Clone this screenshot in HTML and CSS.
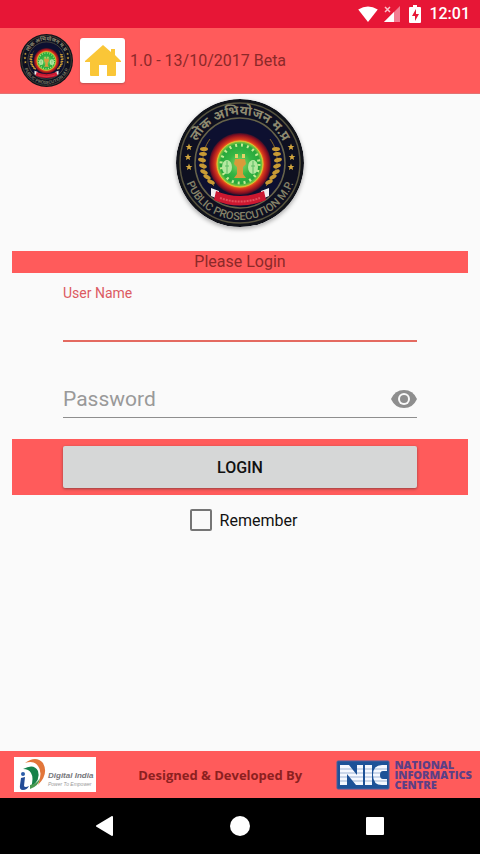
FILE: index.html
```
<!DOCTYPE html>
<html lang="en">
<head>
    <meta charset="UTF-8">
    <meta name="viewport" content="width=device-width, initial-scale=1.0">
    <title>Public Prosecution M.P. - Login</title>
    <link rel="stylesheet" href="styles.css">
</head>
<body>
    <!-- shared seal, used in the header and above the form -->
    <svg class="defs" aria-hidden="true">
        <defs>
            <radialGradient id="glow">
                <stop offset="0.7" stop-color="#f0a020"/>
                <stop offset="0.8" stop-color="#d8381c"/>
                <stop offset="0.93" stop-color="#8e1020"/>
                <stop offset="1" stop-color="#3c1028"/>
            </radialGradient>
            <radialGradient id="green">
                <stop offset="0" stop-color="#8fd868"/>
                <stop offset="0.5" stop-color="#35b544"/>
                <stop offset="0.85" stop-color="#28a83c"/>
                <stop offset="1" stop-color="#9fd040"/>
            </radialGradient>
            <path id="arcTop" d="M16 64a48 48 0 0 1 96 0"/>
            <path id="arcBottom" d="M7 64a57 57 0 0 0 114 0"/>
            <path id="star" d="M0-3.4 1-1.1 3.4-1 1.5.6 2.1 3 0 1.7-2.1 3-1.5.6-3.4-1-1-1.1z"/>
            <g id="wheat" fill="#c89a35">
                <path d="M38 87C25 74 23 55 34 40" fill="none" stroke="#8a6a28" stroke-width="1"/>
                <ellipse cx="35" cy="83" rx="4" ry="2" transform="rotate(25 35 83)"/>
                <ellipse cx="31" cy="78" rx="4" ry="2" transform="rotate(30 31 78)"/>
                <ellipse cx="28" cy="73" rx="4" ry="2" transform="rotate(25 28 73)"/>
                <ellipse cx="27" cy="67" rx="4" ry="2" transform="rotate(20 27 67)"/>
                <ellipse cx="26" cy="61" rx="4" ry="2" transform="rotate(15 26 61)"/>
                <ellipse cx="27" cy="55" rx="4" ry="2" transform="rotate(5 27 55)"/>
                <ellipse cx="28" cy="50" rx="4" ry="2"/>
            </g>
        </defs>
        <symbol id="seal" viewBox="0 0 128 128">
            <circle cx="64" cy="64" r="64" fill="#11131a"/>
            <circle cx="64" cy="64" r="60" fill="#0e1020" stroke="#57543f" stroke-width="1.5"/>
            <circle cx="64" cy="64" r="45" fill="#0d1030" stroke="#67634a" stroke-width="1.5"/>
            <use href="#wheat"/>
            <use href="#wheat" transform="matrix(-1 0 0 1 128 0)"/>
            <circle cx="64" cy="65" r="31" fill="url(#glow)"/>
            <circle cx="64" cy="65" r="23" fill="url(#green)" stroke="#e0c030" stroke-width="1"/>
            <circle cx="64" cy="65" r="19" fill="none" stroke="#c4ec94" stroke-width="3" stroke-dasharray="2 4"/>
            <ellipse cx="51" cy="68" rx="5" ry="7" fill="#b5e8a0"/>
            <ellipse cx="77" cy="68" rx="5" ry="7" fill="#b5e8a0"/>
            <path d="M51 62v13M49 67h4M77 62v13M75 67h4" stroke="#5cbc64" stroke-width="1"/>
            <path d="M59 60h10l1 5-3 3v7l3 4H58l3-4v-7l-3-3z" fill="#d99a3a"/>
            <path d="M59 55h3v4h-3zM66 55h3v4h-3z" fill="#e6d36a"/>
            <path d="M35 89l8 3-1 8-7-3zM93 89l-8 3 1 8 7-3z" fill="#f2eeee"/>
            <path d="M40 92q24 10 48 0l2 9q-26 11-52 0z" fill="#cc1830"/>
            <path d="M44 99q20 7 40 0" fill="none" stroke="#e2505c" stroke-width="2" stroke-dasharray="2 1"/>
            <g fill="#d2a63e">
                <use href="#star" x="13" y="48"/>
                <use href="#star" x="12" y="58"/>
                <use href="#star" x="13" y="68"/>
                <use href="#star" x="115" y="48"/>
                <use href="#star" x="116" y="58"/>
                <use href="#star" x="115" y="68"/>
            </g>
            <text class="seal-hindi"><textPath href="#arcTop" startOffset="50%">लोक अभियोजन म.प्र</textPath></text>
            <text class="seal-name"><textPath href="#arcBottom" startOffset="50%">PUBLIC PROSECUTION M.P.</textPath></text>
        </symbol>
    </svg>

    <div class="status">
        <svg width="20" height="16" viewBox="0 0 22 18"><path d="M0 4Q11-3 22 4L11 18z" fill="#fff"/></svg>
        <svg width="18" height="18" viewBox="0 0 18 18">
            <path d="M17 1v16H1z" fill="#f37c92"/>
            <path d="M11 7v10H1z" fill="#fff"/>
            <path d="M2 2l5 5M7 2L2 7" stroke="#fbc0ca" stroke-width="1.5"/>
        </svg>
        <svg class="battery" width="12" height="18" viewBox="0 0 12 18">
            <path d="M4 0h4v2h3q1 0 1 1v14q0 1-1 1H1q-1 0-1-1V3q0-1 1-1h3z" fill="#fff"/>
            <path d="M7 4L3 11h3v5l4-7H7z" fill="#e71636"/>
        </svg>
        <span class="clock">12:01</span>
    </div>

    <header class="header">
        <svg class="logo-small" role="img" aria-label="Public Prosecution M.P."><use href="#seal"/></svg>
        <button class="home" aria-label="Home">
            <svg width="36" height="34" viewBox="0 0 36 34"><path d="M18 1L0 17v1h5v13q0 1 1 1h8V21h8v11h8q1 0 1-1V18h5v-1l-6-6V5h-4v3z" fill="#fac637"/></svg>
        </button>
        <span class="version">1.0 - 13/10/2017 Beta</span>
    </header>

    <main class="main">
        <svg class="logo" role="img" aria-label="Public Prosecution M.P."><use href="#seal"/></svg>
        <form class="form">
            <h1 class="title">Please Login</h1>
            <div class="field active">
                <label for="user">User Name</label>
                <input type="text" id="user">
            </div>
            <div class="field password">
                <input type="password" id="pass" placeholder="Password" aria-label="Password">
                <button type="button" class="eye" aria-label="Show password">
                    <svg width="26" height="18" viewBox="0 0 26 18">
                        <path d="M13 0Q4 0 0 9q4 9 13 9t13-9Q22 0 13 0z" fill="#8e8e8e"/>
                        <circle cx="13" cy="9" r="6" fill="#fafafa"/>
                        <circle cx="13" cy="9" r="4" fill="#8e8e8e"/>
                    </svg>
                </button>
            </div>
            <div class="login-bar">
                <button class="login">LOGIN</button>
            </div>
            <label class="remember"><input type="checkbox"> Remember</label>
        </form>
    </main>

    <footer class="footer">
        <svg class="digital" viewBox="0 0 82 35" role="img" aria-label="Digital India">
            <path d="M0 0h82v35H0z" fill="#fff"/>
            <path d="M11 6Q22-2 29 6q6 11-5 22 5-13 0-19-4-6-13-3z" fill="#e2763a"/>
            <path d="M9 12q11-6 15 2 3 9-7 16 3-9 0-14-2-4-8-4z" fill="#16824a"/>
            <path d="M16 32q9-3 10-11-3 6-10 7z" fill="#4a9a50"/>
            <circle cx="9" cy="17" r="2" fill="#2a5ca8"/>
            <path d="M7 21l4-1-1 9q1 2 5 0-2 4-6 4-4 0-3-5z" fill="#234c96"/>
            <text x="34" y="21" class="digital-name">Digital India</text>
            <text x="34" y="29" class="digital-sub">Power To Empower</text>
        </svg>
        <span class="credit">Designed &amp; Developed By</span>
        <div class="nic">
            <svg width="54" height="30" viewBox="0 0 54 30" role="img" aria-label="NIC">
                <rect x="1" y="1" width="52" height="28" rx="1" fill="#1d5298" stroke="#49619f"/>
                <path d="M4 25V5h9l8 10V5h6v20h-7L11 14v11zM29 5h7v20h-7zM51 5v6h-4q-3 0-3 4t3 4h4v6h-5q-9 0-9-10t9-10z" fill="#f5f8ff"/>
                <path d="M3 9h49M3 13h49M3 17h49M3 21h49" stroke="#1d5298" stroke-opacity="0.4"/>
            </svg>
            <span class="nic-name">NATIONAL<br>INFORMATICS<br>CENTRE</span>
        </div>
    </footer>

    <nav class="nav">
        <button aria-label="Back"><svg width="20" height="20" viewBox="0 0 20 20"><path d="M17 1v18L2 10z" fill="#fff" stroke="#fff" stroke-width="2" stroke-linejoin="round"/></svg></button>
        <button aria-label="Home screen"><svg width="20" height="20" viewBox="0 0 20 20"><circle cx="10" cy="10" r="10" fill="#fff"/></svg></button>
        <button aria-label="Recent apps"><svg width="20" height="20" viewBox="0 0 20 20"><rect x="1" y="1" width="18" height="18" rx="1" fill="#fff"/></svg></button>
    </nav>
</body>
</html>
```
FILE: styles.css
```
* {
    box-sizing: border-box;
}
body {
    margin: 0;
    min-height: 100vh;
    display: flex;
    flex-direction: column;
    background: #fafafa;
    font-family: Roboto, "Liberation Sans", sans-serif;
    font-size: 16px;
    color: #111;
}
svg {
    display: block;
}
button {
    padding: 0;
    border: none;
    background: none;
    font-family: inherit;
}
.defs {
    position: absolute;
    width: 0;
    height: 0;
}
.seal-hindi {
    font: 700 13px "Noto Sans Devanagari", "Noto Sans", sans-serif;
    fill: #8f8b70;
    text-anchor: middle;
}
.seal-name {
    font: 500 11px Roboto, sans-serif;
    fill: #858268;
    text-anchor: middle;
}
.status {
    height: 28px;
    padding: 0 10px;
    display: flex;
    align-items: center;
    justify-content: flex-end;
    gap: 5px;
    background: #e71636;
    color: #fff;
}
.battery {
    margin: 0 3px;
}
.clock {
    font-size: 16px;
    font-weight: 500;
    line-height: 28px;
}
.header {
    height: 66px;
    padding: 0 20px;
    display: flex;
    align-items: center;
    background: #ff5b5b;
    border-bottom: 1px solid #e27272;
}
.logo-small {
    width: 53px;
    height: 53px;
}
.home {
    width: 45px;
    height: 45px;
    margin: 0 5px 0 7px;
    display: flex;
    align-items: center;
    justify-content: center;
    background: #fff;
    border-radius: 3px;
    box-shadow: 0 1px 2px #c05050;
}
.version {
    color: #8c2929;
}
.main {
    flex: 1;
    padding: 5px 12px 0;
}
.logo {
    width: 128px;
    height: 128px;
    margin: 0 auto 24px;
    border-radius: 50%;
    box-shadow: 0 2px 4px #aaa;
}
.title {
    margin: 0;
    background: #ff5b5b;
    color: #8c2929;
    font-size: 16px;
    font-weight: 400;
    line-height: 22px;
    text-align: center;
}
.field {
    margin: 0 51px;
    border-bottom: 1px solid #8e8e8e;
}
.field label {
    display: block;
    padding-top: 12px;
    font-size: 14px;
    line-height: 16px;
}
.field input {
    width: 100%;
    height: 39px;
    padding: 0;
    border: none;
    outline: none;
    background: none;
    font: 21px Roboto, sans-serif;
}
.active {
    border-bottom: 2px solid #e46a60;
}
.active label {
    color: #dc5a62;
}
.password {
    display: flex;
    align-items: center;
    margin-top: 39px;
}
.field.password input {
    flex: 1;
    min-width: 0;
    height: 36px;
}
.field input::placeholder {
    color: #999;
}
.login-bar {
    margin-top: 21px;
    padding: 7px 51px;
    background: #ff5b5b;
}
.login {
    display: block;
    width: 100%;
    height: 42px;
    background: #d6d7d7;
    border-radius: 2px;
    box-shadow: 0 1px 3px #94403f;
    color: #111;
    font-size: 16px;
    font-weight: 500;
}
.remember {
    display: flex;
    align-items: center;
    justify-content: center;
    gap: 8px;
    margin: 14px 0;
    padding-left: 7px;
}
.remember input {
    appearance: none;
    width: 22px;
    height: 22px;
    margin: 0;
    border: 2px solid #757575;
    border-radius: 2px;
}
.footer {
    height: 47px;
    padding: 0 8px 0 14px;
    display: flex;
    align-items: center;
    justify-content: space-between;
    background: #ff5b5b;
}
.digital {
    width: 82px;
    height: 35px;
}
.digital-name {
    font: italic 700 8px "Liberation Sans", sans-serif;
    fill: #77777c;
}
.digital-sub {
    font: italic 5px "Liberation Sans", sans-serif;
    fill: #999;
}
.credit {
    padding-left: 8px;
    color: #8c2020;
    font: 700 13px "Open Sans", sans-serif;
}
.nic {
    display: flex;
    align-items: center;
    gap: 4px;
}
.nic-name {
    color: #5c3f86;
    font: 800 11px/10px "Open Sans", sans-serif;
}
.nav {
    height: 56px;
    padding: 0 37px;
    display: flex;
    align-items: center;
    background: #000;
}
.nav button {
    flex: 1;
    display: flex;
    justify-content: center;
}
```
